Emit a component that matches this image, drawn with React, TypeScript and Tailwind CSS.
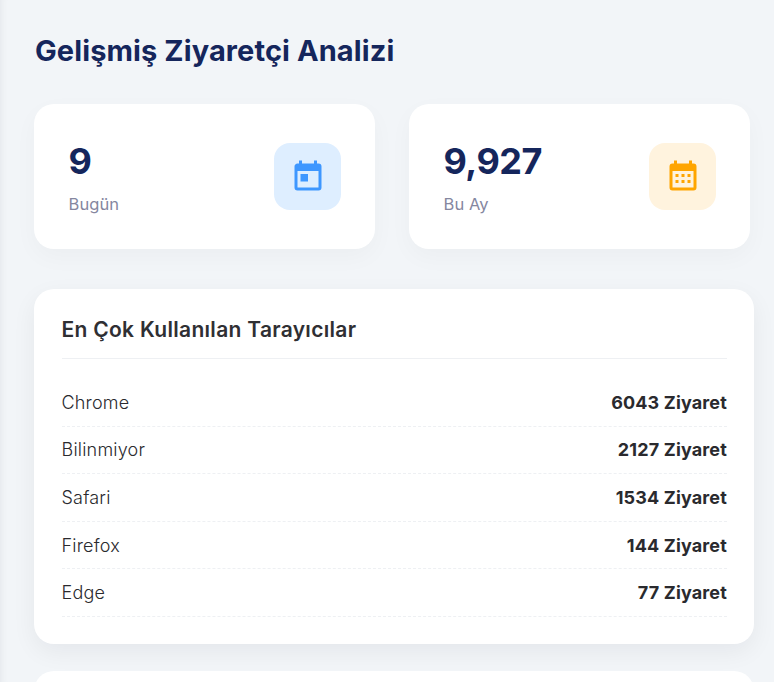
const calendarToday =
  "M7 10h5v5H7m12 4H5V8h14m0-5h-1V1h-2v2H8V1H6v2H5c-1.11 0-2 .9-2 2v14a2 2 0 0 0 2 2h14a2 2 0 0 0 2-2V5a2 2 0 0 0-2-2z";
const calendarMonth =
  "M9 10v2H7v-2h2m4 0v2h-2v-2h2m4 0v2h-2v-2h2m2-7a2 2 0 0 1 2 2v14a2 2 0 0 1-2 2H5a2 2 0 0 1-2-2V5a2 2 0 0 1 2-2h1V1h2v2h8V1h2v2h1m0 16V8H5v11h14M9 14v2H7v-2h2m4 0v2h-2v-2h2m4 0v2h-2v-2h2z";

const browsers = [
  { name: "Chrome", count: 6043 },
  { name: "Bilinmiyor", count: 2127 },
  { name: "Safari", count: 1534 },
  { name: "Firefox", count: 144 },
  { name: "Edge", count: 77 },
];

function StatCard({ value, label, icon, tile, color }: { value: string; label: string; icon: string; tile: string; color: string }) {
  return (
    <div className="w-[341px] h-[145px] bg-white rounded-[20px] shadow-[0_8px_24px_rgba(15,23,42,0.03)] pl-[34.5px] pr-[34px] flex items-center justify-between">
      <div className="mt-[2px]">
        <div className="text-[36px] leading-[43px] font-bold tracking-[-0.5px] text-[#15265c]">{value}</div>
        <div className="text-[16.5px] leading-[24px] mt-[9px] tracking-[0.1px] text-[#85879f]">{label}</div>
      </div>
      <div className={`w-[67px] h-[67px] rounded-[16px] flex items-center justify-center ${tile}`}>
        <svg className={`w-9 h-9 ${color}`} viewBox="0 0 24 24" fill="currentColor">
          <path d={icon} />
        </svg>
      </div>
    </div>
  );
}

export default function App() {
  return (
    <div className="relative h-[682px] overflow-hidden bg-[#f2f5f8] pl-[34px] font-['Inter','Liberation_Sans',sans-serif] shadow-[inset_8px_0_8px_-8px_rgba(15,23,42,0.08)]">
      <h1 className="pt-[31px] pl-px text-[29px] leading-[40px] font-bold tracking-[0.1px] text-[#15265c]">Gelişmiş Ziyaretçi Analizi</h1>
      <div className="flex gap-[34px] mt-[33px]">
        <StatCard value="9" label="Bugün" icon={calendarToday} tile="bg-[#deeeff]" color="text-[#3e97ff]" />
        <StatCard value="9,927" label="Bu Ay" icon={calendarMonth} tile="bg-[#fff3de]" color="text-[#ffa500]" />
      </div>
      <div className="w-[720px] h-[355px] mt-[40px] bg-white rounded-[20px] shadow-[0_8px_24px_rgba(15,23,42,0.06)] pl-[27.5px] pr-[27px] pt-[26px]">
        <h2 className="text-[21px] leading-[30px] font-semibold tracking-[0.3px] text-[#2f2f33] pb-[13px] border-b border-[#eef0f3]">En Çok Kullanılan Tarayıcılar</h2>
        <ul className="mt-[20px]">
          {browsers.map((b) => (
            <li key={b.name} className="h-[47.6px] flex items-center justify-between border-b border-dashed border-[#eef0f3] text-[18px] text-[#2a2a2e]">
              <span className="font-[350] tracking-[0.2px]">{b.name}</span>
              <span className="font-bold tracking-[0.15px]">{b.count} Ziyaret</span>
            </li>
          ))}
        </ul>
      </div>
      <div className="w-[720px] h-[200px] mt-[27px] bg-white rounded-[20px]" />
    </div>
  );
}
